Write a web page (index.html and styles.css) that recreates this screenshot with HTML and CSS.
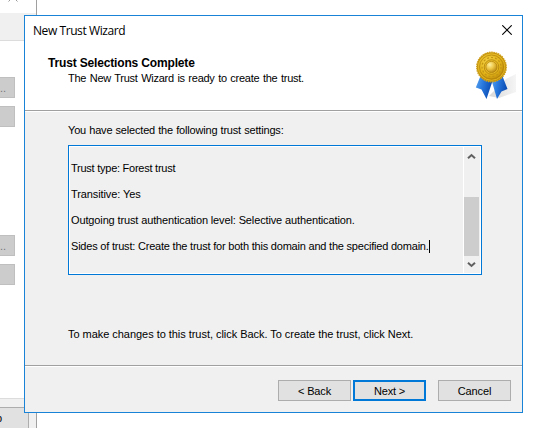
FILE: index.html
```html
<!DOCTYPE html>
<html lang="en">
<head>
<meta charset="utf-8">
<title>New Trust Wizard</title>
<link rel="stylesheet" href="styles.css">
</head>
<body>
<div class="back-window">
  <div class="back-title"><svg width="10" height="10" viewBox="0 0 10 10"><path d="M.5 .5l9 9M9.5 .5l-9 9" stroke="#999" fill="none"/></svg></div>
  <div class="back-tabs"></div>
  <div class="back-page">
    <div class="back-group"><div class="back-button">..</div><div class="back-button"></div></div>
    <div class="back-group"><div class="back-button">..</div><div class="back-button"></div></div>
  </div>
  <div class="back-footer"><div class="help-button">p</div></div>
</div>
<main class="dialog">
  <header class="banner">
    <div class="titlebar">
      <span class="caption">New Trust Wizard</span>
      <svg class="close" width="10" height="10" viewBox="0 0 10 10"><path d="M.3 .3l9.4 9.4M9.7 .3l-9.4 9.4" stroke="#000" stroke-width="1.1" fill="none"/></svg>
    </div>
    <div class="heading">
      <div class="heading-text">
        <h1>Trust Selections Complete</h1>
        <p class="subtitle">The New Trust Wizard is ready to create the trust.</p>
      </div>
      <svg class="medal" width="42" height="50" viewBox="0 0 42 50">
        <defs>
          <radialGradient id="gold" cx=".4" cy=".35" r=".7"><stop offset="0" stop-color="#f7d64a"/><stop offset=".6" stop-color="#e2b41a"/><stop offset="1" stop-color="#b98607"/></radialGradient>
          <radialGradient id="boss" cx=".35" cy=".3" r=".75"><stop offset="0" stop-color="#fff1a0"/><stop offset=".5" stop-color="#ecc545"/><stop offset="1" stop-color="#b88710"/></radialGradient>
          <linearGradient id="ribbon" x2="1" y2=".3"><stop offset="0" stop-color="#5ea6ee"/><stop offset=".45" stop-color="#2a7be0"/><stop offset="1" stop-color="#0a4cb4"/></linearGradient>
          <linearGradient id="shade"><stop offset="0" stop-color="#d8d8d8"/><stop offset="1" stop-color="#f5f5f5"/></linearGradient>
        </defs>
        <path d="M14 46L31 29l10-5v18l-17 6z" fill="url(#shade)"/>
        <path d="M5.500 26L.8 37.500l5.700 2 5 9.500 6-18z" fill="url(#ribbon)"/>
        <path d="M16.500 30l5.500 19 4.500-7.500 6-2.500-5.500-14z" fill="url(#ribbon)"/>
        <circle cx="16.500" cy="17" r="14.700" fill="#be900d"/>
        <circle cx="16.500" cy="17" r="14.800" fill="none" stroke="#d3a21a" stroke-width="1.300" stroke-dasharray="1.500 .8"/>
        <circle cx="16.500" cy="17" r="13.300" fill="url(#gold)" stroke="#e8bd26" stroke-width=".8"/>
        <circle cx="16.500" cy="17" r="12" fill="none" stroke="#b0800c" stroke-width=".7"/>
        <circle cx="16.500" cy="17" r="9.500" fill="none" stroke="#c39414" stroke-width="1.200" stroke-dasharray="2 2"/>
        <circle cx="16.500" cy="17" r="7.300" fill="#e9bd28" stroke="#a77908" stroke-width=".7"/>
        <circle cx="16.500" cy="17" r="5.600" fill="url(#boss)" stroke="#a87809" stroke-width=".6"/>
      </svg>
    </div>
  </header>
  <section class="content">
    <p class="intro">You have selected the following trust settings:</p>
    <div class="settings">
      <div class="lines">
        <p class="l1">Trust type: Forest trust</p>
        <p class="l2">Transitive: Yes</p>
        <p class="l3">Outgoing trust authentication level: Selective authentication.</p>
        <p class="l4"><span>Sides of trust: Create the trust for both this domain and the specified domain.</span><i class="caret"></i></p>
      </div>
      <div class="scrollbar">
        <svg width="9" height="7" viewBox="0 0 9 7"><path d="M1 5.300L4.500 2 8 5.300" fill="none" stroke="#606060" stroke-width="2"/></svg>
        <div class="thumb"></div>
        <svg width="9" height="7" viewBox="0 0 9 7"><path d="M1 1.700L4.500 5 8 1.700" fill="none" stroke="#606060" stroke-width="2"/></svg>
      </div>
    </div>
    <p class="hint">To make changes to this trust, click Back. To create the trust, click Next.</p>
  </section>
  <footer class="actions">
    <button class="btn">&lt; Back</button>
    <button class="btn primary">Next &gt;</button>
    <button class="btn cancel">Cancel</button>
  </footer>
</main>
</body>
</html>
```
FILE: styles.css
```css
* { box-sizing: border-box; }
body { margin: 0; width: 547px; height: 428px; overflow: hidden; background: #fff; color: #000; font: 11px/13px "Liberation Sans", sans-serif; }
p, h1 { margin: 0; white-space: nowrap; }
svg { display: block; }
.back-window { position: absolute; left: 0; top: 0; width: 37px; height: 428px; border-right: 1px solid #a0a0a0; overflow: hidden; display: flex; flex-direction: column; }
.back-title { height: 13px; padding-left: 8px; flex: none; }
.back-title svg { margin-top: -8px; }
.back-tabs { height: 28px; flex: none; background: #f0f0f0; border-bottom: 1px solid #dcdcdc; }
.back-page { height: 357px; flex: none; padding-top: 36px; display: flex; flex-direction: column; gap: 108px; }
.back-group { display: flex; flex-direction: column; gap: 8px; }
.back-button { width: 15px; height: 21px; background: #ccc; border: 1px solid #bfbfbf; border-left: 0; color: #777; line-height: 21px; }
.back-footer { flex: 1; background: #f0f0f0; border-top: 1px solid #dcdcdc; padding-top: 8px; }
.help-button { width: 29px; height: 22px; background: #e1e1e1; border: 1px solid #adadad; border-left: 0; text-indent: -4px; line-height: 20px; }
.dialog { position: absolute; left: 24px; top: 15px; width: 499px; height: 398px; border: 1px solid #1883d7; background: #f0f0f0; display: flex; flex-direction: column; }
.banner { height: 95px; flex: none; background: #fff; border-bottom: 1px solid #a0a0a0; }
.titlebar { height: 30px; display: flex; justify-content: space-between; padding: 7px 10px 0 8px; }
.caption { font: 12px/16px "Open Sans", sans-serif; letter-spacing: -.42px; }
.close { margin-top: 2px; }
.heading { display: flex; justify-content: space-between; padding: 0 5px 0 23px; }
.heading-text { padding-top: 11px; }
h1 { font-size: 12px; line-height: 13px; letter-spacing: -.16px; }
.subtitle { padding: 2px 0 0 20px; letter-spacing: -.25px; word-spacing: .7px; }
.medal { margin-top: 4px; }
.content { height: 254px; flex: none; border-top: 1px solid #fff; padding: 12px 40px 0 43px; }
.intro { letter-spacing: -.18px; word-spacing: .3px; }
.settings { width: 414px; height: 130px; margin-top: 8px; border: 1px solid #0078d7; display: flex; padding: 1px; box-shadow: inset 0 0 0 1px #fff; }
.lines { flex: 1; padding: 15px 0 0 1px; display: flex; flex-direction: column; gap: 13px; }
.l1 { letter-spacing: -.25px; }
.l2 { letter-spacing: -.1px; }
.l3 { letter-spacing: -.13px; }
.l4 { display: flex; letter-spacing: -.21px; }
.caret { width: 1px; height: 13px; background: #000; }
.scrollbar { width: 17px; border-left: 1px solid #fff; display: flex; flex-direction: column; align-items: center; padding: 6px 1px 5px 0; }
.thumb { width: 15px; height: 59px; background: #cdcdcd; margin: 37px 0 5px; }
.hint { margin-top: 53px; letter-spacing: -.04px; }
.actions { flex: 1; border-top: 1px solid #a0a0a0; box-shadow: inset 0 1px #fff; padding: 14px 11px 0 0; display: flex; justify-content: flex-end; gap: 2px; }
.btn { width: 73px; height: 21px; margin: 0; padding: 1px 0 0; font: inherit; color: #000; background: #e1e1e1; border: 1px solid #adadad; border-radius: 0; letter-spacing: -.15px; }
.primary { border: 2px solid #0078d7; }
.cancel { margin-left: 10px; }
```
